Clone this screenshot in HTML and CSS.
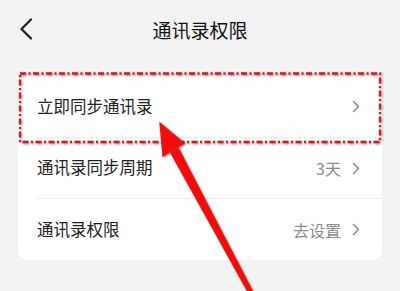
FILE: index.html
```html
<!DOCTYPE html>
<html lang="zh">
<head>
<meta charset="utf-8">
<link rel="stylesheet" href="styles.css">
</head>
<body>
<div class="page">
  <header class="nav">
    <svg class="back" width="14" height="22" viewBox="0 0 14 22"><path d="M12 1.5 L2.5 11 L12 20.5" fill="none" stroke="#1e1e1e" stroke-width="2.2" stroke-linecap="round" stroke-linejoin="round"/></svg>
    <h1 class="title">通讯录权限</h1>
  </header>
  <section class="card">
    <div class="row">
      <span class="label">立即同步通讯录</span>
      <span class="right"><svg class="chev" width="8" height="13" viewBox="0 0 8 13"><path d="M1.5 1.5 L6.5 6.5 L1.5 11.5" fill="none" stroke="#8a8a8a" stroke-width="1.5" stroke-linecap="round" stroke-linejoin="round"/></svg></span>
    </div>
    <div class="row">
      <span class="label">通讯录同步周期</span>
      <span class="right"><span class="value">3天</span><svg class="chev" width="8" height="13" viewBox="0 0 8 13"><path d="M1.5 1.5 L6.5 6.5 L1.5 11.5" fill="none" stroke="#8a8a8a" stroke-width="1.5" stroke-linecap="round" stroke-linejoin="round"/></svg></span>
    </div>
    <div class="row">
      <span class="label">通讯录权限</span>
      <span class="right"><span class="value">去设置</span><svg class="chev" width="8" height="13" viewBox="0 0 8 13"><path d="M1.5 1.5 L6.5 6.5 L1.5 11.5" fill="none" stroke="#8a8a8a" stroke-width="1.5" stroke-linecap="round" stroke-linejoin="round"/></svg></span>
    </div>
  </section>
  <svg class="annot" width="400" height="291" viewBox="0 0 400 291">
    <rect class="box" x="20" y="73.5" width="360" height="68.5" fill="none" stroke="#e0121b" stroke-width="2.3" stroke-dasharray="6 2.5 2 2.5"/>
    <g class="arrow">
      <polygon points="159.3,121.7 162.5,157 185,143.3" fill="#f20d0d"/>
      <polygon points="178.5,147.5 170,152.5 249.8,296.2 254.4,293.8" fill="#f20d0d"/>
    </g>
  </svg>
</div>
</body>
</html>
```
FILE: styles.css
```css
html, body {
  margin: 0;
  padding: 0;
}
body {
  background: #f3f3f3;
  font-family: "Noto Sans CJK SC", "Noto Sans", sans-serif;
  color: #222;
}
.page {
  position: relative;
  width: 400px;
  height: 291px;
  overflow: hidden;
}
.nav {
  height: 60px;
  position: relative;
  display: flex;
  align-items: center;
  justify-content: center;
}
.back {
  position: absolute;
  left: 19px;
  top: 18px;
}
.title {
  margin: 0;
  font-size: 19px;
  font-weight: 400;
  line-height: 1;
  color: #111;
  padding-bottom: 1px;
}
.card {
  margin: 16px 18px 0;
  background: #fff;
  border-radius: 9px;
}
.row {
  height: 61px;
  margin-left: 19px;
  padding-right: 22px;
  display: flex;
  align-items: center;
  justify-content: space-between;
  border-bottom: 1px solid #ececec;
  box-sizing: border-box;
}
.row:last-child {
  border-bottom: none;
}
.row:first-child {
  height: 62px;
}
.label {
  font-size: 16.5px;
  line-height: 1;
  color: #222;
  padding-bottom: 1px;
}
.right {
  display: flex;
  align-items: center;
  gap: 11px;
}
.value {
  font-size: 16px;
  line-height: 1;
  color: #8c8c8c;
}
.chev {
  display: block;
}
.annot {
  position: absolute;
  left: 0;
  top: 0;
  pointer-events: none;
}
.box {
  filter: drop-shadow(1px 1px 1px rgba(0,0,0,0.45));
}
.arrow {
  filter: drop-shadow(1.5px 1px 1px rgba(0,0,0,0.5));
}
```
